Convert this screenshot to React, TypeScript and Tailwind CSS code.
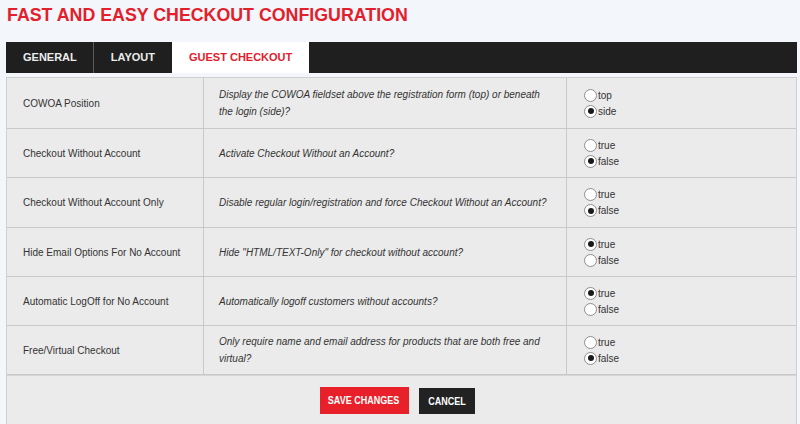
import React from "react";

type Row = {
  label: string;
  desc: string;
  options: [string, string];
  checked: 0 | 1;
  h: string;
};

const rows: Row[] = [
  {
    label: "COWOA Position",
    desc: "Display the COWOA fieldset above the registration form (top) or beneath the login (side)?",
    options: ["top", "side"],
    checked: 1,
    h: "h-[51px]",
  },
  {
    label: "Checkout Without Account",
    desc: "Activate Checkout Without an Account?",
    options: ["true", "false"],
    checked: 1,
    h: "h-[49px]",
  },
  {
    label: "Checkout Without Account Only",
    desc: "Disable regular login/registration and force Checkout Without an Account?",
    options: ["true", "false"],
    checked: 1,
    h: "h-[50px]",
  },
  {
    label: "Hide Email Options For No Account",
    desc: 'Hide "HTML/TEXT-Only" for checkout without account?',
    options: ["true", "false"],
    checked: 0,
    h: "h-[49px]",
  },
  {
    label: "Automatic LogOff for No Account",
    desc: "Automatically logoff customers without accounts?",
    options: ["true", "false"],
    checked: 0,
    h: "h-[49px]",
  },
  {
    label: "Free/Virtual Checkout",
    desc: "Only require name and email address for products that are both free and virtual?",
    options: ["true", "false"],
    checked: 1,
    h: "h-[49px]",
  },
];

function Radio({ on }: { on: boolean }) {
  return (
    <span className="flex h-[13px] w-[13px] shrink-0 items-center justify-center rounded-full border border-[#8e8e8e] bg-white">
      {on && <span className="h-[6px] w-[6px] rounded-full bg-[#1a1a1a]" />}
    </span>
  );
}

export default function App() {
  return (
    <div className="min-h-screen bg-[#f3f6fa] pl-[6px] pr-[3px] pt-[6px] font-['Liberation_Sans',Arial,sans-serif]">
      <h1 className="ml-[1px] text-[17.8px] font-bold leading-[19px] text-[#e2202b]">
        FAST AND EASY CHECKOUT CONFIGURATION
      </h1>

      <div className="mt-[17px] flex h-[31px] bg-[#1f1f1f] text-[11px] font-bold">
        <div className="flex items-center border-r border-[#5a5a5a] pl-[17px] pr-[16px] text-[#ececec]">
          GENERAL
        </div>
        <div className="flex items-center px-[17px] text-[#ececec]">LAYOUT</div>
        <div className="flex items-center bg-white px-[17px] text-[#e2202b]">GUEST CHECKOUT</div>
      </div>

      <div className="mt-[4px] border-x border-t border-[#cfcfcf] bg-[#ebebeb]">
        {rows.map((r, i) => (
          <div
            key={i}
            className={`grid grid-cols-[197px_363px_1fr] border-b border-[#c9c9c9] text-[10px] text-[#333] ${r.h}`}
          >
            <div className="flex items-center border-r border-[#c9c9c9] pl-[16px]">{r.label}</div>
            <div className="flex items-center border-r border-[#c9c9c9] pl-[15px] pr-[16px] italic leading-[17px]">
              {r.desc}
            </div>
            <div className="flex flex-col justify-center gap-[3px] pl-[17px]">
              {r.options.map((o, j) => (
                <div key={j} className="flex items-center gap-[1px] leading-[13px]">
                  <Radio on={r.checked === j} />
                  <span>{o}</span>
                </div>
              ))}
            </div>
          </div>
        ))}
        <div className="flex h-[60px] items-start justify-center gap-[10px] border-t border-[#d6d6d6] pr-[9px] pt-[11px] text-[11px] font-bold text-white">
          <button className="flex h-[27px] w-[89px] items-center justify-center bg-[#e8202a]">
            <span className="inline-block scale-x-[0.82] whitespace-nowrap">SAVE CHANGES</span>
          </button>
          <button className="mt-[1px] flex h-[26px] w-[56px] items-center justify-center bg-[#222222]">
            <span className="inline-block scale-x-[0.82] whitespace-nowrap">CANCEL</span>
          </button>
        </div>
      </div>
    </div>
  );
}
